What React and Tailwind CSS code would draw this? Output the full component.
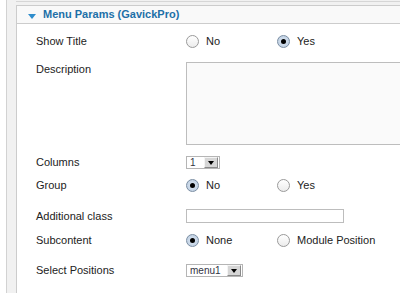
import React from 'react';

function Radio({ checked }) {
  if (checked) {
    return (
      <span className="relative inline-flex w-[13px] h-[13px] shrink-0 rounded-full border border-[#7b8ea3] bg-[radial-gradient(circle,#dbe6f2_0%,#b9cade_100%)] items-center justify-center">
        <span className="w-[5px] h-[5px] rounded-full bg-black" />
      </span>
    );
  }
  return (
    <span className="inline-block w-[13px] h-[13px] shrink-0 rounded-full border border-[#9a9a9a] bg-[linear-gradient(#ffffff,#ececec)]" />
  );
}

function RadioGroup({ options, value }) {
  return (
    <div className="flex items-center">
      {options.map((o, i) => (
        <div key={o} className={`flex items-center gap-[7px] ${i === 0 ? 'w-[91px]' : ''}`}>
          <Radio checked={o === value} />
          <span>{o}</span>
        </div>
      ))}
    </div>
  );
}

function Select({ value, width }) {
  return (
    <div className={`flex items-center justify-between h-[13px] border border-[#b5b5b5] bg-white ${width} pl-[3px] pr-px`}>
      <span className="text-[10px] leading-none text-[#334]">{value}</span>
      <span className="flex items-center justify-center w-[14px] h-[11px] bg-[#d6d6d6] border-r border-b border-[#8a8a8a] border-l border-t border-l-[#f4f4f4] border-t-[#f4f4f4]">
        <span className="w-0 h-0 border-l-[3px] border-r-[3px] border-t-[4px] border-l-transparent border-r-transparent border-t-black" />
      </span>
    </div>
  );
}

function Row({ label, className, alignTop, children }) {
  return (
    <div className={`flex ${alignTop ? 'items-start' : 'items-center'} ${className}`}>
      <div className={`w-[150px] shrink-0 ${alignTop ? 'pt-px' : ''}`}>{label}</div>
      {children}
    </div>
  );
}

export default function App() {
  return (
    <div className="w-[400px] h-[293px] overflow-hidden bg-white font-['Liberation_Sans',Arial,sans-serif] text-[11px] leading-[13px] text-[#222] pl-[6px]">
      <div className="h-full border-l border-[#d2d2d2] bg-[#f1f1f1] pl-[9px] pt-[1px]">
        <div className="h-full border-t border-[#d6d6d6] pt-[3px]">
          <div className="h-full border-l border-t border-[#cccccc] bg-white">
            <div className="flex items-center h-[18px] bg-[#f9f9f9] border-b border-[#cccccc] pl-[11px] gap-[7px]">
              <span className="w-0 h-0 border-l-[4px] border-r-[4px] border-t-[5px] border-l-transparent border-r-transparent border-t-[#2f8dcc] mt-[3px]" />
              <span className="font-bold text-[11px] text-[#1d70a8]">Menu Params (GavickPro)</span>
            </div>
            <div className="pl-[19px]">
              <Row label="Show Title" className="h-[34px]">
                <RadioGroup options={['No', 'Yes']} value="Yes" />
              </Row>
              <Row label="Description" className="pt-[4px] h-[95px]" alignTop>
                <div className="w-[260px] h-[83px] border border-[#bdbdbd] bg-[#fafafa] shrink-0" />
              </Row>
              <Row label="Columns" className="h-[19px]">
                <Select value="1" width="w-[34px]" />
              </Row>
              <Row label="Group" className="h-[26px]">
                <RadioGroup options={['No', 'Yes']} value="No" />
              </Row>
              <Row label="Additional class" className="h-[24px] mt-[6px]">
                <div className="w-[158px] h-[14px] border border-[#bdbdbd] bg-white" />
              </Row>
              <Row label="Subcontent" className="h-[24px]">
                <RadioGroup options={['None', 'Module Position']} value="None" />
              </Row>
              <Row label="Select Positions" className="h-[37px]">
                <Select value="menu1" width="w-[57px]" />
              </Row>
            </div>
          </div>
        </div>
      </div>
    </div>
  );
}
